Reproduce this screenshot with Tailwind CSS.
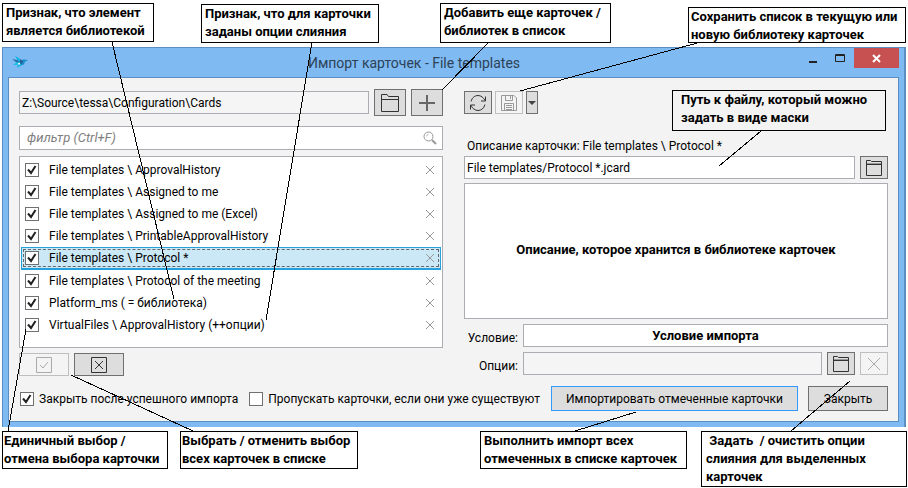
<!DOCTYPE html>
<html lang="ru">
<head>
    <meta charset="UTF-8">
    <meta name="viewport" content="width=device-width, initial-scale=1.0">
    <title>Импорт карточек - File templates</title>
    <script src="https://cdn.jsdelivr.net/npm/@tailwindcss/browser@4"></script>
</head>
<body class="relative min-h-screen bg-white text-black text-[12px] leading-4 font-['Roboto',sans-serif]">

    <!-- Общие иконки -->
    <svg class="hidden">
        <symbol id="icon-folder" viewBox="0 0 18 18">
            <path d="M.5 17.5V.5H6L7.5 2.500H17.500V17.500Z M.5 5.500H17.500" fill="none" stroke="currentColor"/>
        </symbol>
        <symbol id="icon-folder-small" viewBox="0 0 16 16">
            <path d="M.5 15.500V.5H4.500L5.500 1.500H15.500V15.500Z M.5 4.500H15.500" fill="none" stroke="currentColor"/>
            <path d="M1 3.500H15" stroke="#999"/>
        </symbol>
        <symbol id="icon-check" viewBox="0 0 14 14">
            <path d="M3 6.500l3 3.500L10.500 3" fill="none" stroke="currentColor" stroke-width="2"/>
        </symbol>
        <symbol id="icon-cross" viewBox="0 0 10 10">
            <path d="M1 1l8 8M9 1L1 9" fill="none" stroke="currentColor"/>
        </symbol>
    </svg>

    <main class="pt-[47px]">
        <div class="mx-[2px] border border-r-2 border-b-0 border-[#5a8fc0] bg-[#7fbaf2] px-[5px] pb-[5px]">

            <header class="flex h-[29px] items-start">
                <svg class="ml-1 mt-2 h-[12px] w-[16px]" viewBox="0 0 16 12">
                    <path d="M3 0l4 2 3 4-3 1z" fill="#14b4e0"/>
                    <path d="M0 3l5 1 3 2-3 1z" fill="#2a6ea8"/>
                    <path d="M8 5l3-1.500 2 0 3 1-3 1-1 3-4 1z" fill="#1a8fc8"/>
                    <path d="M1 9l4-3 3 1-3 2z" fill="#14c0e8"/>
                    <path d="M8 3l3 2-1 3-2-1z" fill="#2b5f98"/>
                    <path d="M5 12l1-4 5 1-3 1z" fill="#14b4e0"/>
                    <path d="M6 7h2v1.500h-2z" fill="#dff4fc"/>
                </svg>
                <h1 class="flex-1 pt-[5px] text-center text-[14px] leading-5 text-[#2d4257]">Импорт карточек - File templates</h1>
                <button type="button" aria-label="Свернуть" class="flex h-5 w-[27px] items-center justify-center">
                    <svg class="h-[11px] w-[11px]" viewBox="0 0 11 11"><path d="M1 9h8" stroke="#222" stroke-width="2"/></svg>
                </button>
                <button type="button" aria-label="Развернуть" class="flex h-5 w-[27px] items-center justify-center">
                    <svg class="h-[9px] w-[11px]" viewBox="0 0 11 9"><path d="M.5.5h9v7h-9zM.5 1.500h9" fill="none" stroke="#222"/></svg>
                </button>
                <button type="button" aria-label="Закрыть окно" class="flex h-5 w-[45px] items-center justify-center bg-[#c75050] text-white">
                    <svg class="h-[9px] w-[9px]" viewBox="0 0 9 9"><path d="M1 1l7 7M8 1L1 8" stroke="currentColor" stroke-width="2"/></svg>
                </button>
            </header>

            <div class="border border-[#5a8fc0] bg-[#f3f3f3] px-[10px] pt-[11px] pb-[10px]">
                <div class="grid grid-cols-2 gap-[21px]">

                    <!-- Список карточек -->
                    <section class="flex flex-col">
                        <div class="flex items-center gap-[5px]">
                            <input type="text" aria-label="Папка" readonly value="Z:\Source\tessa\Configuration\Cards" class="h-[23px] min-w-0 flex-1 border border-[#abadb3] bg-[#f5f5f5] px-[2px]">
                            <button type="button" aria-label="Открыть папку" class="flex h-[27px] w-8 items-center justify-center border border-[#707070] bg-[#dddddd] text-[#333]"><svg class="size-[18px]"><use href="#icon-folder"/></svg></button>
                            <button type="button" aria-label="Добавить" class="flex h-[27px] w-8 items-center justify-center border border-[#707070] bg-[#dddddd] text-[#666]">
                                <svg class="size-4" viewBox="0 0 16 16"><path d="M8 0v16M0 8h16" stroke="currentColor" stroke-width="2"/></svg>
                            </button>
                        </div>

                        <div class="mt-[10px] flex h-6 items-center border border-[#abadb3] bg-white pr-[5px] pl-[7px]">
                            <input type="text" aria-label="Фильтр" placeholder="фильтр (Ctrl+F)" class="min-w-0 flex-1 text-[13px] italic outline-none placeholder:text-[#808080]">
                            <svg class="size-[14px]" viewBox="0 0 14 14" fill="none" stroke="#999"><circle cx="5.500" cy="5.500" r="4.500"/><path d="M3.500 5.500a2 2 0 0 1 2-2" stroke="#bbb"/><path d="M9 9l4 4" stroke-width="2"/></svg>
                        </div>

                        <ul id="cards" class="mt-[6px] h-[192px] border border-[#abadb3] bg-white px-px py-[2px]"></ul>

                        <div class="mt-[5px] flex gap-[5px]">
                            <button type="button" disabled aria-label="Выбрать все" class="flex h-[23px] w-[50px] items-center justify-center border border-[#bfbfbf] bg-[#f4f4f4] text-[#aaa]">
                                <svg class="size-4" viewBox="0 0 16 16" fill="none" stroke="currentColor"><path d="M.5.5h15v15H.5zM4 8l3 3 5-6"/></svg>
                            </button>
                            <button type="button" aria-label="Отменить выбор" class="flex h-[23px] w-[50px] items-center justify-center border border-[#707070] bg-[#dddddd] text-[#333]">
                                <svg class="size-4" viewBox="0 0 16 16" fill="none" stroke="currentColor"><path d="M.5.5h15v15H.5zM4 4l8 8M12 4l-8 8"/></svg>
                            </button>
                        </div>
                    </section>

                    <!-- Параметры выбранной карточки -->
                    <section class="flex flex-col pt-[2px]">
                        <div class="flex gap-[3px]">
                            <button type="button" aria-label="Обновить" class="flex h-[23px] w-7 items-center justify-center border border-[#707070] bg-[#dddddd] text-[#333]">
                                <svg class="h-[18px] w-4" viewBox="0 0 16 18" fill="none" stroke="currentColor"><path d="M1 7.500C2 3.500 5 1.500 8 1.500S13.500 3.500 15 6.500M15.500 2.500V7H11M15 10.500C14 14.500 11 16.500 8 16.500S2.500 14.500 1 11.500M.5 15.500V11H5"/></svg>
                            </button>
                            <button type="button" disabled aria-label="Сохранить" class="flex h-[23px] w-7 items-center justify-center border border-[#bfbfbf] bg-[#f4f4f4] text-[#999]">
                                <svg class="size-4" viewBox="0 0 16 16" fill="none" stroke="currentColor"><path d="M.5.5H13L15.500 3V15.500H.5zM4.500.5V5.500H11.500V.5M9.500 1V4M3.500 15V8.500H12.500V15M5 10.500h6M5 12.500h6M5 14.500h6"/></svg>
                            </button>
                            <button type="button" aria-label="Варианты сохранения" class="flex h-[23px] w-3 items-center justify-center border border-[#707070] bg-[#dddddd] text-[#444]">
                                <svg class="h-1 w-2" viewBox="0 0 8 4"><path d="M0 0h8L4 4z" fill="currentColor"/></svg>
                            </button>
                        </div>

                        <label for="path" class="mt-6 pl-[3px]">Описание карточки: File templates \ Protocol *</label>
                        <div class="mt-[2px] flex gap-[5px]">
                            <input id="path" type="text" value="File templates/Protocol *.jcard" class="h-[23px] min-w-0 flex-1 border border-[#abadb3] bg-white px-[2px]">
                            <button type="button" aria-label="Выбрать файл" class="flex h-[23px] w-7 items-center justify-center border border-[#707070] bg-[#dddddd] text-[#333]"><svg class="size-4"><use href="#icon-folder-small"/></svg></button>
                        </div>

                        <textarea aria-label="Описание" class="mt-1 h-[136px] resize-none border border-[#abadb3] bg-white pt-[57px] text-center text-[13px] leading-[18px] font-bold">Описание, которое хранится в библиотеке карточек</textarea>

                        <div class="mt-[5px] grid grid-cols-[54px_1fr] items-center gap-[5px]">
                            <label for="condition" class="pt-1 text-right">Условие:</label>
                            <input id="condition" type="text" value="Условие импорта" class="h-[23px] min-w-0 border border-[#abadb3] bg-white text-center text-[13px] font-bold">
                            <label for="options" class="pt-1 text-right">Опции:</label>
                            <div class="flex gap-[5px]">
                                <input id="options" type="text" readonly class="h-[23px] min-w-0 flex-1 border border-[#abadb3] bg-[#f5f5f5] px-[2px]">
                                <button type="button" aria-label="Задать опции" class="flex h-[23px] w-7 items-center justify-center border border-[#707070] bg-[#dddddd] text-[#333]"><svg class="size-4"><use href="#icon-folder-small"/></svg></button>
                                <button type="button" disabled aria-label="Очистить опции" class="flex h-[23px] w-7 items-center justify-center border border-[#bfbfbf] bg-[#f4f4f4] text-[#aaa]">
                                    <svg class="size-3" viewBox="0 0 12 12" stroke="currentColor"><path d="M0 0l12 12M12 0L0 12"/></svg>
                                </button>
                            </div>
                        </div>
                    </section>
                </div>

                <footer class="mt-[10px] flex items-center whitespace-nowrap">
                    <label class="ml-px flex items-center gap-[5px]">
                        <span class="grid">
                            <input type="checkbox" checked class="peer col-start-1 row-start-1 size-[14px] appearance-none border border-[#707070] bg-white">
                            <svg class="pointer-events-none col-start-1 row-start-1 hidden size-[14px] text-[#212121] peer-checked:block"><use href="#icon-check"/></svg>
                        </span>
                        Закрыть после успешного импорта
                    </label>
                    <label class="ml-[11px] flex items-center gap-[5px]">
                        <span class="grid">
                            <input type="checkbox" class="peer col-start-1 row-start-1 size-[14px] appearance-none border border-[#707070] bg-white">
                            <svg class="pointer-events-none col-start-1 row-start-1 hidden size-[14px] text-[#212121] peer-checked:block"><use href="#icon-check"/></svg>
                        </span>
                        Пропускать карточки, если они уже существуют
                    </label>
                    <button type="button" class="ml-auto h-[25px] w-[247px] border border-[#3399ff] bg-[#dddddd]">Импортировать отмеченные карточки</button>
                    <button type="button" class="ml-[10px] h-[25px] w-20 border border-[#707070] bg-[#dddddd]">Закрыть</button>
                </footer>
            </div>
        </div>
    </main>

    <!-- Выноски с пояснениями -->
    <div class="text-[13px] leading-[18px] font-bold whitespace-nowrap">
        <svg class="pointer-events-none absolute top-0 left-0 h-[488px] w-[908px]" viewBox="0 0 908 488" fill="none" stroke="#000" shape-rendering="crispEdges">
            <path d="M112 42L174 299M312 42L266 320M489 42L442 90M701 42L520 91M761 131L719 166M26 329L8 431M71 375L193 431M575 431L636 412M850 381L791 431"/>
        </svg>
        <p class="absolute top-[3px] left-[2px] h-[39px] w-[152px] border border-black bg-white pl-[3px]">Признак, что элемент<br>является библиотекой</p>
        <p class="absolute top-[4px] left-[201px] h-[39px] w-[178px] border border-black bg-white pl-[3px]">Признак, что для карточки<br>заданы опции слияния</p>
        <p class="absolute top-[3px] left-[440px] h-[40px] w-[171px] border border-black bg-white pl-[3px]">Добавить еще карточек /<br>библиотек в список</p>
        <p class="absolute top-[7px] left-[688px] h-[36px] w-[218px] border border-black bg-white pl-[2px]">Сохранить список в текущую или<br>новую библиотеку карточек</p>
        <p class="absolute top-[90px] left-[672px] h-[41px] w-[214px] border border-black bg-[#f3f3f3] pl-2">Путь к файлу, который можно<br>задать в виде маски</p>
        <p class="absolute top-[431px] left-[2px] h-[38px] w-[166px] border border-black bg-white pl-px">Единичный выбор /<br>отмена выбора карточки</p>
        <p class="absolute top-[431px] left-[180px] h-[38px] w-[178px] border border-black bg-white pl-px">Выбрать / отменить выбор<br>всех карточек в списке</p>
        <p class="absolute top-[431px] left-[480px] h-[38px] w-[207px] border border-black bg-white pl-[3px]">Выполнить импорт всех<br>отмеченных в списке карточек</p>
        <p class="absolute top-[431px] left-[701px] h-[56px] w-[206px] border border-black bg-white pl-1 whitespace-pre"> Задать  / очистить опции
слияния для выделенных
карточек</p>
    </div>

    <script>
        const cards = [
            { name: 'File templates \\ ApprovalHistory' },
            { name: 'File templates \\ Assigned to me' },
            { name: 'File templates \\ Assigned to me (Excel)' },
            { name: 'File templates \\ PrintableApprovalHistory' },
            { name: 'File templates \\ Protocol *', selected: true },
            { name: 'File templates \\ Protocol of the meeting' },
            { name: 'Platform_ms ( = библиотека)' },
            { name: 'VirtualFiles \\ ApprovalHistory (++опции)' },
        ];
        const list = document.getElementById('cards');

        cards.forEach(card => {
            const li = document.createElement('li');
            li.className = card.selected
                ? 'h-[23px] border border-b-2 border-[#26a0da] bg-[#cbe8f6]'
                : 'h-[22px] border border-transparent';
            li.innerHTML = `
                <div class="flex h-full items-center pr-[5px] pl-[3px] ${card.selected ? 'outline-1 -outline-offset-2 outline-dashed outline-[#666]' : ''}">
                    <label class="flex flex-1 items-center gap-[10px]">
                        <span class="grid">
                            <input type="checkbox" checked class="peer col-start-1 row-start-1 size-[14px] appearance-none border border-[#707070] bg-white">
                            <svg class="pointer-events-none col-start-1 row-start-1 hidden size-[14px] text-[#212121] peer-checked:block"><use href="#icon-check"/></svg>
                        </span>
                        ${card.name}
                    </label>
                    <button type="button" aria-label="Удалить" class="text-[#999]"><svg class="size-[10px]"><use href="#icon-cross"/></svg></button>
                </div>
            `;
            list.appendChild(li);
        });
    </script>
</body>
</html>
